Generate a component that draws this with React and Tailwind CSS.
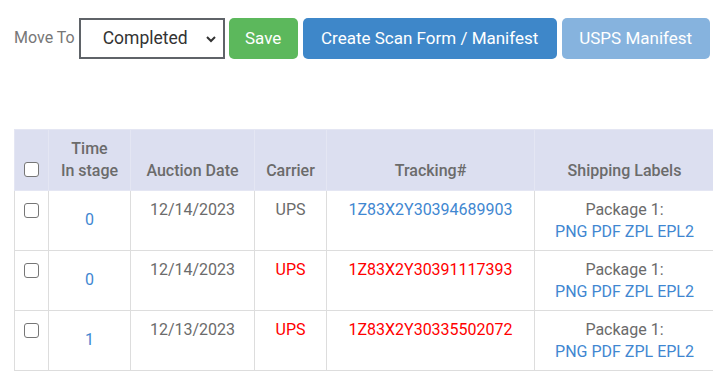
const rows = [
  { time: '0', date: '12/14/2023', carrier: 'UPS', tracking: '1Z83X2Y30394689903', alert: false },
  { time: '0', date: '12/14/2023', carrier: 'UPS', tracking: '1Z83X2Y30391117393', alert: true },
  { time: '1', date: '12/13/2023', carrier: 'UPS', tracking: '1Z83X2Y30335502072', alert: true },
];

const Checkbox = () => (
  <span className="block w-[15px] h-[15px] border-[1.5px] border-[#767676] rounded-[3px] bg-white" />
);

export default function App() {
  return (
    <div className="w-[713px] h-[389px] overflow-hidden bg-white font-['Roboto',sans-serif] text-[#6b6b6b]">
      <div className="flex items-center pl-[14px] pt-[18px]">
        <span className="text-[16px] text-[#777] mr-[4px] -mt-[2px]">Move To</span>
        <div className="relative w-[146px] h-[41px] border-2 border-[#5f6368] flex items-center pl-[22px] text-[17.5px] text-[#333]">
          Completed
          <svg
            className="absolute right-[6px] top-[14px]"
            width="12"
            height="10"
            viewBox="0 0 12 10"
            fill="none"
            stroke="#333"
            strokeWidth="2"
          >
            <path d="M2 3l4 4 4-4" />
          </svg>
        </div>
        <button className="ml-[4px] w-[69px] h-[41px] rounded-[5px] bg-[#5cb85c] text-white text-[17px]">
          Save
        </button>
        <button className="ml-[5px] w-[254px] h-[41px] rounded-[5px] bg-[#3e87c9] text-white text-[17px]">
          Create Scan Form / Manifest
        </button>
        <button className="ml-[5px] w-[148px] h-[41px] rounded-[5px] bg-[#86b3de] text-white text-[17px]">
          USPS Manifest
        </button>
      </div>

      <table className="mt-[70px] ml-[14px] border-collapse text-[16px] leading-[22px] w-[700px] table-fixed">
        <colgroup>
          <col className="w-[34px]" />
          <col className="w-[82px]" />
          <col className="w-[124px]" />
          <col className="w-[72px]" />
          <col className="w-[208px]" />
          <col className="w-[180px]" />
        </colgroup>
        <thead>
          <tr className="bg-[#dcdff0] text-[#6b6b6b]">
            <th className="border border-[#e4e6f3] px-[9px] pt-[8px] pb-[13px] align-bottom">
              <Checkbox />
            </th>
            <th className="border border-[#e4e6f3] py-[8px] align-bottom font-medium">
              Time
              <br />
              In stage
            </th>
            <th className="border border-[#e4e6f3] py-[8px] align-bottom font-medium">Auction Date</th>
            <th className="border border-[#e4e6f3] py-[8px] align-bottom font-medium">Carrier</th>
            <th className="border border-[#e4e6f3] py-[8px] align-bottom font-medium">Tracking#</th>
            <th className="border border-[#e4e6f3] py-[8px] align-bottom font-medium">Shipping Labels</th>
          </tr>
        </thead>
        <tbody>
          {rows.map((r, i) => (
            <tr key={i} className="h-[59px]">
              <td className="border border-[#dddddd] px-[9px] pt-[12px] align-top">
                <Checkbox />
              </td>
              <td className="border border-[#dddddd] text-center align-middle text-[#3f87d1] pb-[2px]">
                {r.time}
              </td>
              <td className="border border-[#dddddd] text-center align-top pt-[8px]">{r.date}</td>
              <td className={`border border-[#dddddd] text-center align-top pt-[8px] ${r.alert ? 'text-[#ff0000]' : ''}`}>
                {r.carrier}
              </td>
              <td className={`border border-[#dddddd] text-center align-top pt-[8px] ${r.alert ? 'text-[#ff0000]' : 'text-[#3f87d1]'}`}>
                {r.tracking}
              </td>
              <td className="border border-[#dddddd] text-center align-top pt-[8px] pb-[7px]">
                <div>Package 1:</div>
                <div className="text-[#3f87d1]">PNG PDF ZPL EPL2</div>
              </td>
            </tr>
          ))}
        </tbody>
      </table>
    </div>
  );
}
